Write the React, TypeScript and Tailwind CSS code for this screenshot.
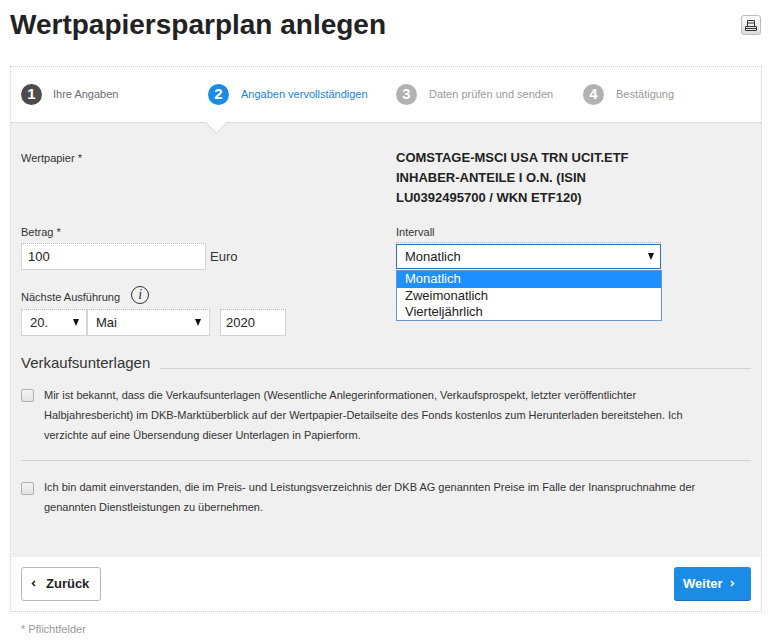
const steps = [
  { n: "1", label: "Ihre Angaben", w: "w-[187px]", gap: "ml-[11px]", circle: "bg-[#4d4b4b]", text: "text-[#6b6b6b]" },
  { n: "2", label: "Angaben vervollständigen", w: "w-[188px]", gap: "ml-[12px]", circle: "bg-[#1a8ce6]", text: "text-[#1a82dc]" },
  { n: "3", label: "Daten prüfen und senden", w: "w-[187px]", gap: "ml-[12px]", circle: "bg-[#b3b1b2]", text: "text-[#9a9a9a]" },
  { n: "4", label: "Bestätigung", w: "w-[150px]", gap: "ml-[12px]", circle: "bg-[#b3b1b2]", text: "text-[#9a9a9a]" },
];

function Caret() {
  return <span className="h-0 w-0 border-x-[3.5px] border-t-[7px] border-x-transparent border-t-[#111]" />;
}

function Field({ children, className }: { children: React.ReactNode; className: string }) {
  return (
    <div className={`flex h-[27px] items-center border border-[#d4d4d4] border-t-[#b5b5b5] bg-white text-[13px] text-[#222] [border-top-style:dotted] ${className}`}>
      {children}
    </div>
  );
}

function Check({ className }: { className: string }) {
  return <span className={`h-[13px] w-[13px] shrink-0 rounded-[2px] border border-[#b0b0b0] bg-gradient-to-b from-[#f4f4f4] to-[#e2e2e2] ${className}`} />;
}

function Chevron({ d, className }: { d: string; className: string }) {
  return (
    <svg width="5" height="7" viewBox="0 0 5 7" fill="none" stroke="currentColor" strokeWidth="1.5" className={className}>
      <path d={d} />
    </svg>
  );
}

export default function App() {
  return (
    <div className="h-[640px] w-[770px] overflow-hidden bg-white pl-[10px] pr-[8px] font-['Liberation_Sans',Arial,sans-serif] text-[#333]">
      <div className="flex h-[66px] items-start justify-between">
        <h1 className="mt-[8px] text-[28px] font-bold leading-[34px] text-[#222]">Wertpapiersparplan anlegen</h1>
        <div className="mr-[1px] mt-[15px] flex h-[20px] w-[20px] items-center justify-center rounded-[3px] border border-[#bbb] bg-gradient-to-b from-white to-[#ddd]">
          <svg width="14" height="13" viewBox="0 0 14 13" fill="none" stroke="#333" strokeWidth="1">
            <path d="M3.5 7V1.5h7V7M1.5 7.5h11v4h-11zM1.5 9.5h11M3.5 4h7" />
          </svg>
        </div>
      </div>

      <div className="flex h-[546px] flex-col border border-dotted border-[#cfcfcf]">
        <div className="relative flex h-[55px] shrink-0 items-center pl-[10px]">
          {steps.map((s) => (
            <div key={s.n} className={`flex items-center ${s.w}`}>
              <span className={`flex h-[21px] w-[21px] items-center justify-center rounded-full text-[15px] font-bold text-white ${s.circle}`}>
                {s.n}
              </span>
              <span className={`text-[11px] ${s.gap} ${s.text}`}>{s.label}</span>
            </div>
          ))}
          <div className="absolute left-[198px] top-[49px] z-10 h-[15px] w-[15px] rotate-45 border-b border-r border-[#d8d8d8] bg-white" />
        </div>

        <div className="relative flex-1 border-t border-dotted border-[#c8c8c8] bg-[#f0f0f0] px-[10px]">
          <div className="flex">
            <div className="w-[375px] shrink-0">
              <p className="mt-[28px] text-[11px] leading-[14px]">Wertpapier *</p>
              <p className="mt-[60px] text-[11px] leading-[14px]">Betrag *</p>
              <div className="mt-[4px] flex items-center">
                <Field className="w-[185px] pl-[6px]">100</Field>
                <span className="ml-[4px] text-[13px]">Euro</span>
              </div>
              <div className="mt-[17px] flex h-[20px] items-center">
                <span className="text-[11px]">Nächste Ausführung</span>
                <span className="-mt-[4px] ml-[11px] flex h-[18px] w-[18px] items-center justify-center rounded-full border border-[#333] font-['Liberation_Serif',serif] text-[14px] italic leading-none">
                  i
                </span>
              </div>
              <div className="mt-[2px] flex">
                <Field className="w-[66px] justify-between pl-[8px] pr-[7px]">
                  <span>20.</span>
                  <Caret />
                </Field>
                <Field className="w-[123px] justify-between pl-[8px] pr-[8px]">
                  <span>Mai</span>
                  <Caret />
                </Field>
                <Field className="ml-[10px] w-[66px] pl-[5px]">2020</Field>
              </div>
            </div>
            <div className="relative min-w-0 flex-1">
              <p className="mt-[25px] w-[250px] text-[13px] font-bold leading-[20px] text-[#222]">
                COMSTAGE-MSCI USA TRN UCIT.ETF INHABER-ANTEILE I O.N. (ISIN LU0392495700 / WKN ETF120)
              </p>
              <p className="mt-[17px] text-[11px] leading-[14px]">Intervall</p>
              <div className="mt-[3px] h-[27px] w-[265px] border-t border-dotted border-[#b5b5b5] pt-px">
                <div className="flex h-[25px] items-center justify-between border border-[#2a74b8] bg-white pl-[8px] pr-[6px] text-[13px] text-[#222]">
                  <span>Monatlich</span>
                  <Caret />
                </div>
              </div>
              <div className="absolute left-0 top-[147px] w-[266px] border border-[#6b93d6] bg-white text-[13px] leading-[16px] text-[#222]">
                <div className="bg-[#1e90ff] pb-[1px] pl-[8px] text-white">Monatlich</div>
                <div className="pl-[8px]">Zweimonatlich</div>
                <div className="pl-[8px]">Vierteljährlich</div>
              </div>
            </div>
          </div>

          <div className="mt-[17px] flex items-end">
            <h2 className="text-[15px] leading-[20px] text-[#333]">Verkaufsunterlagen</h2>
            <div className="mb-[4px] ml-[10px] h-px flex-1 bg-[#d0d0d0]" />
          </div>

          <div className="mt-[12px] flex border-b border-[#d4d4d4] pb-[15px]">
            <Check className="mt-[4px]" />
            <p className="ml-[10px] w-[670px] text-[11px] leading-[20px]">
              Mir ist bekannt, dass die Verkaufsunterlagen (Wesentliche Anlegerinformationen, Verkaufsprospekt, letzter veröffentlichter Halbjahresbericht) im DKB-Marktüberblick auf der Wertpapier-Detailseite des Fonds kostenlos zum Herunterladen bereitstehen. Ich verzichte auf eine Übersendung dieser Unterlagen in Papierform.
            </p>
          </div>

          <div className="mt-[16px] flex">
            <Check className="mt-[5px]" />
            <p className="ml-[10px] w-[670px] text-[11px] leading-[20px]">
              Ich bin damit einverstanden, die im Preis- und Leistungsverzeichnis der DKB AG genannten Preise im Falle der Inanspruchnahme der genannten Dienstleistungen zu übernehmen.
            </p>
          </div>
        </div>

        <div className="flex h-[54px] shrink-0 items-center justify-between px-[10px] pb-[1px]">
          <button className="flex h-[34px] w-[80px] items-center rounded-[3px] border border-[#b5b5b5] bg-white pl-[9px] text-[13px] font-bold text-[#222]">
            <Chevron d="M4 1 1.5 3.5 4 6" className="mr-[10px]" />Zurück
          </button>
          <button className="flex h-[34px] w-[77px] items-center rounded-[3px] border-y border-t-[#1a8ce6] border-b-[#1571bd] bg-[#1a8ce6] pl-[9px] text-[13px] font-bold text-white">
            Weiter<Chevron d="M1 1l2.5 2.5L1 6" className="ml-[7px]" />
          </button>
        </div>
      </div>

      <p className="mt-[9px] pl-[11px] text-[11px] text-[#999]">* Pflichtfelder</p>
    </div>
  );
}
